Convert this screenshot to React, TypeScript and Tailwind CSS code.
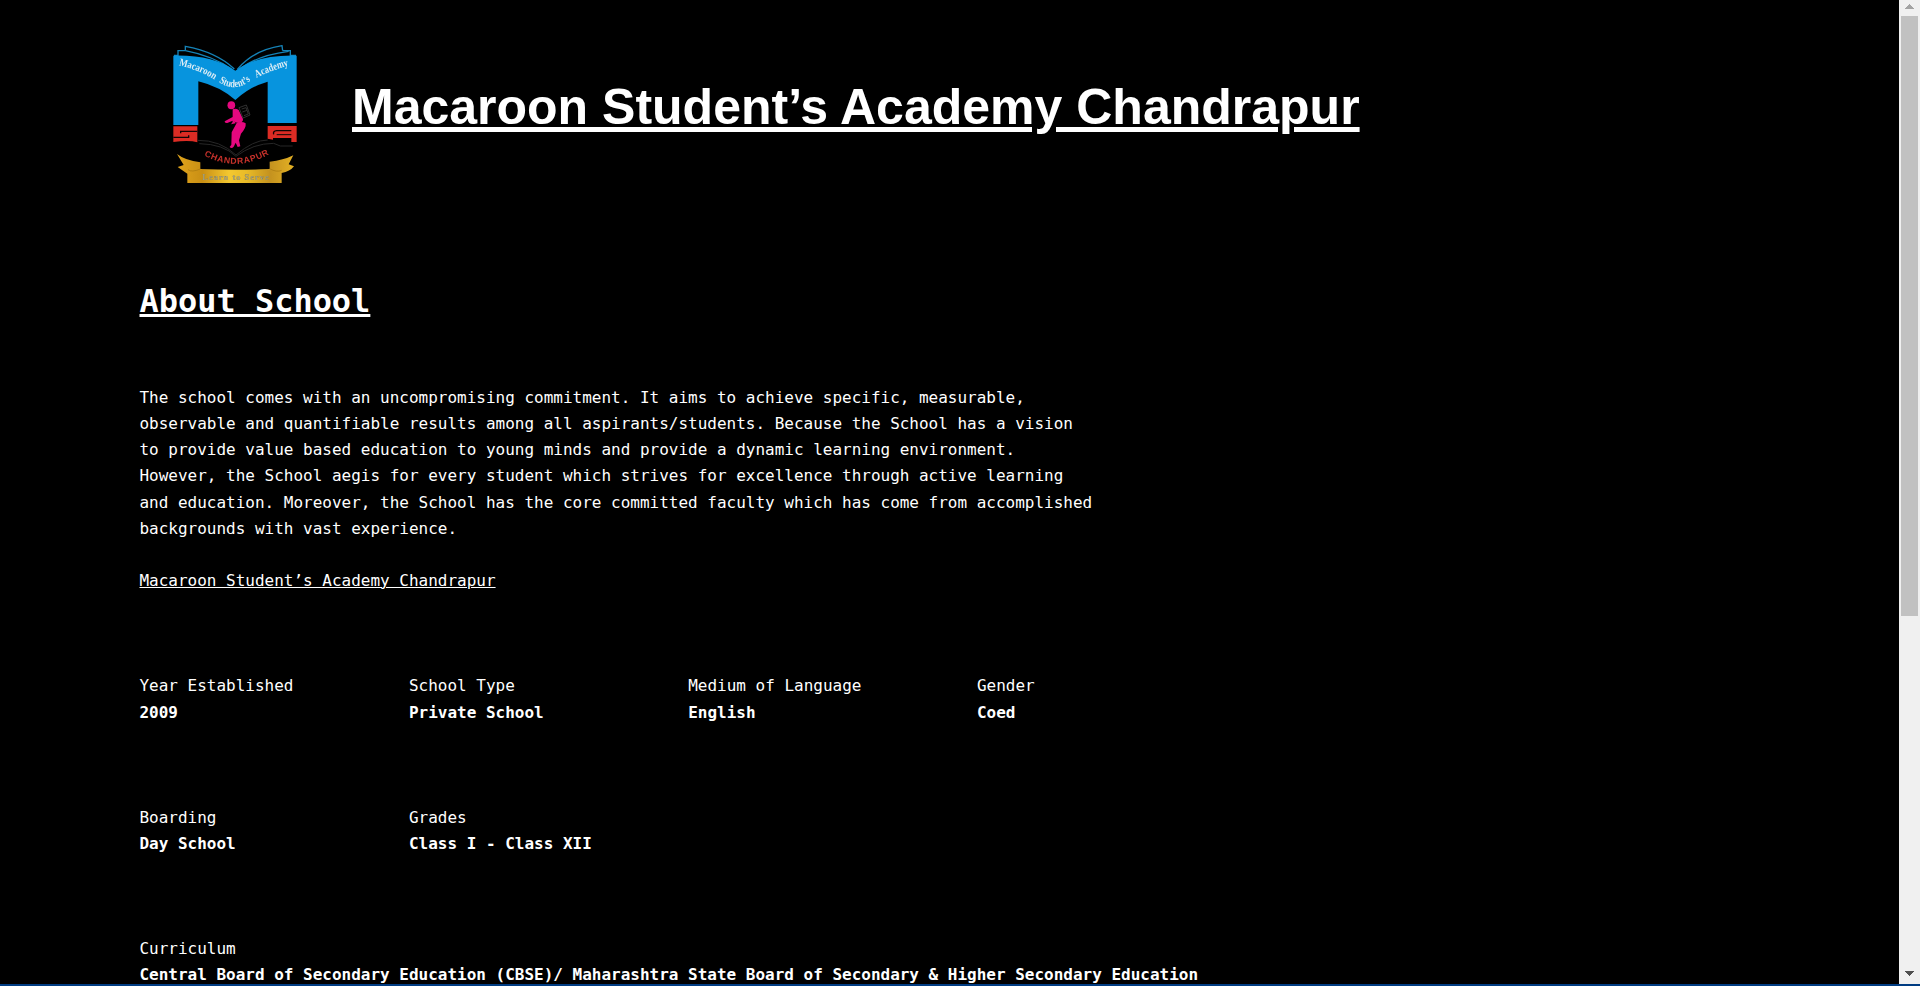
const paragraph = [
  "The school comes with an uncompromising commitment. It aims to achieve specific, measurable,",
  "observable and quantifiable results among all aspirants/students. Because the School has a vision",
  "to provide value based education to young minds and provide a dynamic learning environment.",
  "However, the School aegis for every student which strives for excellence through active learning",
  "and education. Moreover, the School has the core committed faculty which has come from accomplished",
  "backgrounds with vast experience.",
];

function Logo() {
  return (
    <svg className="block h-[165px] w-[150px] shrink-0 blur-[0.5px]" viewBox="0 0 450 495" fill="none">
      <defs>
        <linearGradient id="gold" x1="50" y1="0" x2="400" y2="0" gradientUnits="userSpaceOnUse">
          <stop offset="0" stopColor="#e0a41c" />
          <stop offset="0.22" stopColor="#c98f14" />
          <stop offset="0.45" stopColor="#f4c830" />
          <stop offset="0.6" stopColor="#e9bb27" />
          <stop offset="0.8" stopColor="#c4921f" />
          <stop offset="1" stopColor="#e3b024" />
        </linearGradient>
        <path id="arcLeft" d="M56 106 Q120 120 168 152" />
        <path id="arcMid" d="M176 156 Q228 192 280 144" />
        <path id="arcRight" d="M290 143 Q335 120 390 106" />
        <path id="arcCity" d="M132 376 Q230 430 332 370" />
      </defs>
      <g stroke="#1583b8" strokeWidth="4">
        <path d="M42 76 L54 76 L54 62 L76 62" />
        <path d="M76 62 L76 49 Q170 66 223 117" />
        <path d="M76 62 Q160 78 217 119" />
        <path d="M408 76 L391 76 L391 62 L368 62" />
        <path d="M368 62 L366 47 Q280 60 232 118" />
        <path d="M386 64 Q290 76 238 119" />
      </g>
      <path
        d="M40 77 Q158 74 226 122 Q290 74 410 77 L410 279 L323 279 L323 155 Q270 170 226 210 Q180 170 115 154 L115 285 L40 285 Z"
        fill="#0794de"
      />
      <g fill="#dcecf5" fontFamily="Liberation Serif, serif" fontWeight="700" fontSize="32">
        <text><textPath href="#arcLeft" textLength="116" lengthAdjust="spacingAndGlyphs">Macaroon</textPath></text>
        <text><textPath href="#arcMid" textLength="104" lengthAdjust="spacingAndGlyphs">Student’s</textPath></text>
        <text><textPath href="#arcRight" textLength="103" lengthAdjust="spacingAndGlyphs">Academy</textPath></text>
      </g>
      <path d="M40 289 H112 V337 Q88 330 40 336 Z M323 288 H410 V336 H394 V324 H339 V329 L323 326 Z" fill="#dc2c24" />
      <path d="M112 304 H62 V310 M40 322 H86 V316" stroke="#120504" strokeWidth="4" />
      <path d="M341 313 Q338 303 350 302 H394" stroke="#120504" strokeWidth="4" />
      <path d="M350 314 H394" stroke="#120504" strokeWidth="3" />
      <g stroke="#272727" strokeWidth="3">
        <path d="M113 331 Q180 330 228 375 Q280 330 323 330" />
        <path d="M118 341 Q190 342 228 379 Q280 340 341 340 L361 348 H398" />
      </g>
      <g fill="#e6087f">
        <ellipse cx="214" cy="226" rx="11.5" ry="12" />
        <path d="M218 238 Q227 233 236 240 L249 267 Q250 276 238 279 Q230 280 218 272 L202 279 Q193 280 194 274 L218 261 Z" />
        <path d="M218 276 Q210 286 213 283 L227 280 Q223 270 217 269 Z" />
        <path d="M230 279 Q245 272 257 280 Q259 294 243 311 L237 331 L241 349 L233 351 L227 338 L221 350 Q215 358 209 351 L214 344 L215 307 Z" />
      </g>
      <g stroke="#303030" strokeWidth="3">
        <path d="M237 233 L259 225 L270 255 L249 264 Z" />
        <path d="M245 237 L258 233 L265 252 L252 257 M247 246 L261 241" />
      </g>
      <text fill="#c8322b" fontFamily="Liberation Sans, sans-serif" fontWeight="700" fontSize="26">
        <textPath href="#arcCity" textLength="205" lengthAdjust="spacing">CHANDRAPUR</textPath>
      </text>
      <path
        d="M51 372 Q75 391 121 397 L121 417 Q225 422 329 417 L329 395 Q370 391 400 376 L386 403 L402 409 Q390 425 365 429 V459 H82 V431 L53 411 L71 405 Z"
        fill="url(#gold)"
      />
      <path d="M84 419 Q95 428 121 417 M329 416 Q350 428 365 421" stroke="#a67711" strokeWidth="2" />
      <text x="127" y="449" textLength="199" lengthAdjust="spacing" fill="#a9a98d" stroke="#81733d" strokeWidth="0.7" fontFamily="Liberation Serif, serif" fontWeight="700" fontSize="25">
        Learn to Serve
      </text>
    </svg>
  );
}

function Scrollbar() {
  return (
    <div className="flex h-full w-[21px] shrink-0 flex-col items-center bg-[#f0f0f0]">
      <svg className="h-4 w-[17px] shrink-0" viewBox="0 0 17 16" shapeRendering="crispEdges">
        <path d="M4 9 L8.5 4 L13 9Z" fill="#a3a3a3" />
      </svg>
      <div className="h-[600px] w-[17px] shrink-0 bg-[#c1c1c1]" />
      <div className="grow" />
      <svg className="h-4 w-[17px] shrink-0" viewBox="0 0 17 16" shapeRendering="crispEdges">
        <path d="M4 3 L8.5 8 L13 3Z" fill="#505050" />
      </svg>
    </div>
  );
}

function Field({ label, value }: { label: string; value: string }) {
  return (
    <div>
      <div>{label}</div>
      <div className="font-bold">{value}</div>
    </div>
  );
}

export default function App() {
  return (
    <div className="flex h-[986px] w-[1920px] flex-col overflow-hidden bg-black text-white">
      <div className="flex h-[984px] shrink-0 overflow-hidden">
        <main className="h-full grow overflow-hidden pl-[139.5px]">
          <header className="flex pt-[30px] pl-[20.5px]">
            <Logo />
            <h1 className="mt-[47px] ml-[42px] font-['Liberation_Sans',Arial,sans-serif] text-[50px] leading-[60px] font-bold whitespace-nowrap underline decoration-[5px] underline-offset-[3px]">
              Macaroon Student’s Academy Chandrapur
            </h1>
          </header>
          <div className="font-['DejaVu_Sans_Mono',monospace] text-[15.99px] leading-[26.25px] whitespace-pre">
            <h2 className="mt-[80px] text-[31.96px] leading-[52px] font-bold underline decoration-[3px] underline-offset-[2px]">About School</h2>
            <div className="mt-[57.6px]">
              {paragraph.map((line) => (
                <div key={line}>{line}</div>
              ))}
            </div>
            <a className="mt-[26.25px] block underline decoration-1 underline-offset-1">Macaroon Student’s Academy Chandrapur</a>
            <div className="mt-[78.75px] grid grid-cols-[269.5px_279.2px_288.8px_auto]">
              <Field label="Year Established" value="2009" />
              <Field label="School Type" value="Private School" />
              <Field label="Medium of Language" value="English" />
              <Field label="Gender" value="Coed" />
            </div>
            <div className="mt-[78.75px] grid grid-cols-[269.5px_auto]">
              <Field label="Boarding" value="Day School" />
              <Field label="Grades" value="Class I - Class XII" />
            </div>
            <div className="mt-[78.75px]">
              <Field
                label="Curriculum"
                value="Central Board of Secondary Education (CBSE)/ Maharashtra State Board of Secondary & Higher Secondary Education"
              />
            </div>
          </div>
        </main>
        <Scrollbar />
      </div>
      <div className="h-[2px] shrink-0 bg-[#003c82]" />
    </div>
  );
}
